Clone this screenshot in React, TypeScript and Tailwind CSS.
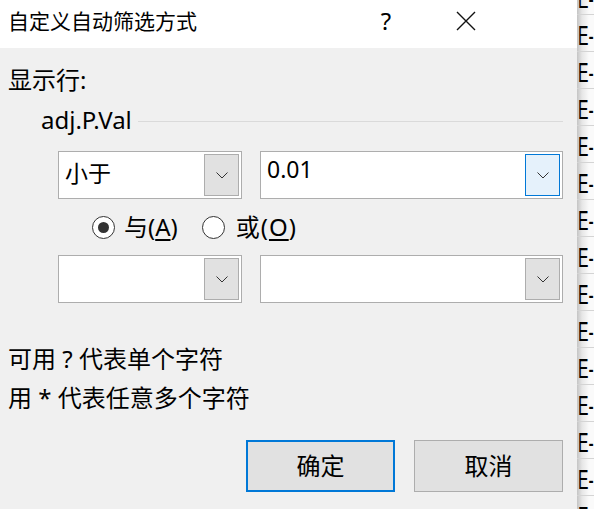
import React from "react";

/* ---------------- SMALL PARTS ---------------- */

function Chevron() {
  return (
    <svg width="12" height="7" viewBox="0 0 12 7" fill="none">
      <path d="M0.5 0.5L6 6L11.5 0.5" stroke="#333" strokeWidth="1" />
    </svg>
  );
}

function Combo({
  value,
  width,
  active,
}: {
  value?: string;
  width: string;
  active?: boolean;
}) {
  return (
    <div
      className={`${width} h-[48px] bg-white border border-[#adadad] flex items-stretch p-[2px]`}
    >
      <div
        className={
          active
            ? "flex-1 flex items-center pl-[4px] pb-[11px] text-[23px] text-black"
            : "flex-1 flex items-center pl-[4px] pb-[3px] text-[23px] text-black"
        }
      >
        {value}
      </div>
      <div
        className={
          active
            ? "w-[35px] border border-[#0078d7] bg-[#e5f1fb] flex items-center justify-center"
            : "w-[35px] border border-[#adadad] bg-[#e1e1e1] flex items-center justify-center"
        }
      >
        <Chevron />
      </div>
    </div>
  );
}

function Radio({ checked }: { checked?: boolean }) {
  return (
    <div className="w-[23px] h-[23px] rounded-full border-[1.5px] border-[#333] bg-white flex items-center justify-center">
      {checked && <div className="w-[11px] h-[11px] rounded-full bg-[#333]" />}
    </div>
  );
}

/* ---------------- PAGE ---------------- */

export default function App() {
  const rows = Array.from({ length: 15 }, (_, i) => i);

  return (
    <div className="w-[594px] h-[509px] flex overflow-hidden font-['Noto_Sans','Noto_Sans_CJK_SC',sans-serif] text-black">
      {/* DIALOG */}
      <div className="w-[577px] flex flex-col">
        {/* TITLE BAR */}
        <div className="h-[48px] bg-white flex items-center pl-[8px] pr-[71px]">
          <div className="flex-1 text-[21px] leading-none pb-[6px]">
            自定义自动筛选方式
          </div>
          <div className="w-[80px] flex justify-center text-[24px] leading-none pb-[6px]">
            ?
          </div>
          <div className="w-[80px] flex justify-center pb-[6px]">
            <svg width="20" height="20" viewBox="0 0 20 20" fill="none">
              <path d="M1 1L19 19M19 1L1 19" stroke="#111" strokeWidth="1.4" />
            </svg>
          </div>
        </div>

        {/* BODY */}
        <div className="flex-1 bg-[#f0f0f0] pl-[8px] pr-[14px] text-[24px]">
          <div className="h-[28px] mt-[18px] flex items-center">显示行:</div>

          <div className="h-[28px] mt-[12px] flex items-center pl-[33px]">
            <span>adj.P.Val</span>
            <div className="flex-1 h-px bg-[#dadada] ml-[6px] mt-[2px]" />
          </div>

          {/* FIRST CONDITION */}
          <div className="mt-[17px] flex gap-[18px] pl-[50px]">
            <Combo value="小于" width="w-[184px]" />
            <Combo value="0.01" width="w-[303px]" active />
          </div>

          {/* AND / OR */}
          <div className="h-[28px] mt-[14px] flex items-center pl-[84px]">
            <Radio checked />
            <span className="ml-[9px]">
              与(<span className="underline underline-offset-[3px]">A</span>)
            </span>
            <div className="ml-[24px]">
              <Radio />
            </div>
            <span className="ml-[11px] tracking-[1px]">
              或(<span className="underline underline-offset-[3px]">O</span>)
            </span>
          </div>

          {/* SECOND CONDITION */}
          <div className="mt-[14px] flex gap-[18px] pl-[50px]">
            <Combo width="w-[184px]" />
            <Combo width="w-[303px]" />
          </div>

          {/* HINTS */}
          <div className="h-[28px] mt-[42px] flex items-center">可用 ? 代表单个字符</div>
          <div className="h-[28px] mt-[11px] flex items-center">用 * 代表任意多个字符</div>

          {/* BUTTONS */}
          <div className="mt-[28px] flex justify-end gap-[19px]">
            <button className="w-[149px] h-[52px] bg-[#e1e1e1] border-2 border-[#0078d7] text-[24px]">
              确定
            </button>
            <button className="w-[149px] h-[52px] bg-[#e1e1e1] border border-[#adadad] text-[24px]">
              取消
            </button>
          </div>
        </div>
      </div>

      {/* SHEET BEHIND */}
      <div className="flex-1 bg-[linear-gradient(to_right,#c4c4c4,#e6e6e6_5px,#fafafa_12px)] overflow-hidden">
        <div className="-mt-[22px]">
          {rows.map((r) => (
            <div
              key={r}
              className="h-[37px] border-b border-[#d4d4d4] flex items-center pl-[1px] pt-[6px] font-['Liberation_Sans',sans-serif] text-[28px] leading-none whitespace-nowrap"
            >
              <span className="inline-block scale-x-[0.56] origin-left">E-</span>
            </div>
          ))}
        </div>
      </div>
    </div>
  );
}
